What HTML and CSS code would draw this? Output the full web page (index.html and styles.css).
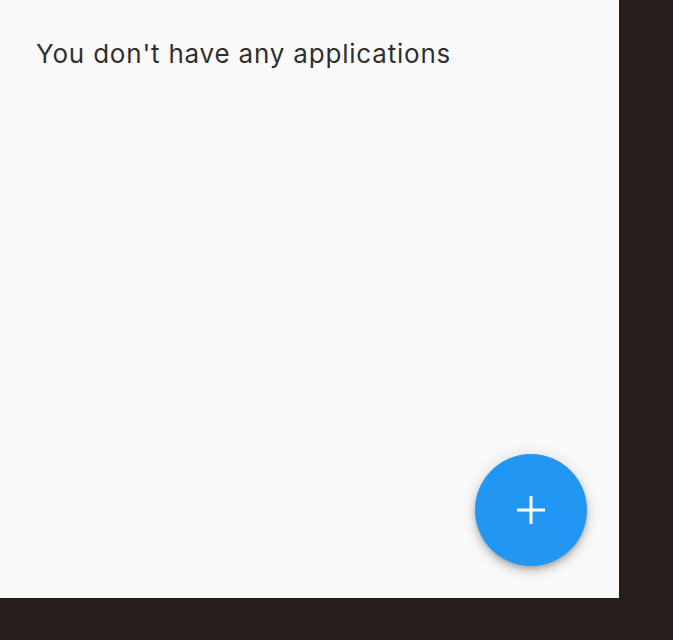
FILE: index.html
```html
<!DOCTYPE html>
<html>
<head>
<meta charset="utf-8">
<link rel="stylesheet" href="styles.css">
</head>
<body>
<div class="panel">
  <p class="empty">You don't have any applications</p>
  <button class="fab" aria-label="Add">
    <svg width="28" height="28" viewBox="0 0 28 28"><path d="M14 0V28M0 14H28" stroke="#fff" stroke-width="3"/></svg>
  </button>
</div>
</body>
</html>
```
FILE: styles.css
```css
html, body {
  margin: 0;
  padding: 0;
  background: #281f1c;
  width: 673px;
  height: 640px;
  overflow: hidden;
}
.panel {
  position: relative;
  width: 619px;
  height: 598px;
  background: #fafafa;
  box-sizing: border-box;
  padding: 34px 36px;
}
.empty {
  margin: 0;
  font-family: Inter, "Liberation Sans", sans-serif;
  font-size: 26px;
  line-height: 40px;
  color: rgba(0,0,0,0.84);
  letter-spacing: 0.8px;
}
.fab {
  position: absolute;
  left: 475px;
  top: 454px;
  width: 112px;
  height: 112px;
  border: none;
  border-radius: 50%;
  background: #2196f3;
  display: flex;
  align-items: center;
  justify-content: center;
  padding: 0;
  box-shadow: 0 6px 10px rgba(0,0,0,0.14), 0 1px 18px rgba(0,0,0,0.12), 0 3px 5px -1px rgba(0,0,0,0.2);
}
.fab svg { display: block; }
```
